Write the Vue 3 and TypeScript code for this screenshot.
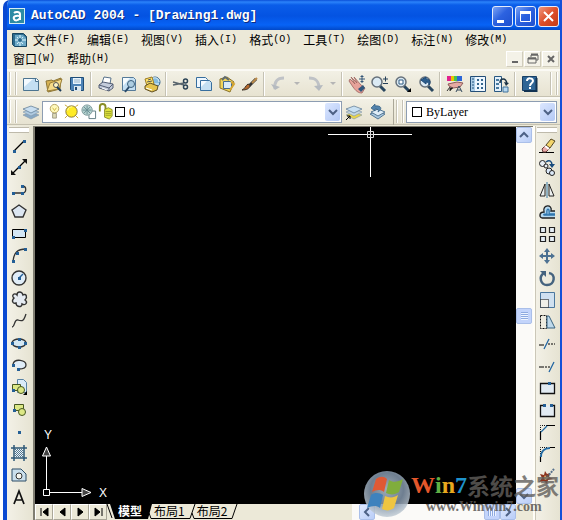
<script setup lang="ts">
import { ref } from 'vue'

interface Tool { icon: string; label: string }

const blue = '#245f96'
const sheet = '#c4dff2'
const dot = (x: number, y: number): string => `<rect x="${x - 1}" y="${y - 1}" width="3" height="3" fill="${blue}"/>`
const lens = (x: number, y: number, inner: string): string =>
  `<path d="M${x + 3} ${y + 4}l5 5" stroke="#29465f" stroke-width="3"/><circle cx="${x}" cy="${y}" r="5" fill="#dbeaf4" stroke="#66717b" stroke-width="1.5"/>${inner}`

const stack = (a: string, b: string, c: string): string =>
  `<path d="M1 12l8-3 8 3-8 4z" fill="${c}" stroke="#7f93a5" stroke-width=".6"/><path d="M1 9l8-3 8 3-8 4z" fill="${b}" stroke="#7f93a5" stroke-width=".6"/><path d="M1 6l8-3 8 3-8 4z" fill="${a}" stroke="#58748e" stroke-width=".7"/>`

const icons: Record<string, string> = {
  new: `<path d="M1.500 3.500h13l2 2v10h-15z" fill="${sheet}" stroke="#4c7490"/><path d="M2 4h9l-9 8z" fill="#f3faff"/><path d="M13.500 3v3.500h3" fill="#fff" stroke="#4c7490"/>`,
  open: `<path d="M1 6l6-1 1 1 8-3-1 11-12 3z" fill="#d7b253" stroke="#8b7434"/><path d="M2 16l3-8 12-4-3 10z" fill="#f5da88" stroke="#9b803a"/><circle cx="11" cy="10" r="2.500" fill="#fff7c6" stroke="#555"/><path d="M12 12l4 4" stroke="#193957" stroke-width="2"/>`,
  save: `<path d="M2.500 2.500h13v13h-12l-1-1z" fill="#4e83b6" stroke="#1d4c78"/><path d="M5 3h8v6h-8z" fill="#e8f4fc"/><path d="M6 5h6M6 7h6" stroke="#9ab4c9"/><path d="M6 11h7v5h-7z" fill="#dce8ef"/><path d="M7 12h2v3h-2z" fill="#234a72"/>`,
  print: `<path d="M5 8l2-6 7 1-1 6z" fill="#fff" stroke="#58728c"/><path d="M2 10l4-3 10 2v4l-4 3-10-3z" fill="#c4ccdb" stroke="#555f75"/><path d="M2 10l10 3 4-4M12 13v3" fill="none" stroke="#555f75"/><path d="M5 13l5 2" stroke="#fff"/>`,
  preview: `<path d="M2.500 2.500h11l2 2v11h-13z" fill="${sheet}" stroke="#557a99"/><path d="M3 3h7l-7 8z" fill="#f6fcff"/><circle cx="11" cy="9" r="3.500" fill="#adcde1" stroke="#3c607c"/><path d="M9 12l-4 5" stroke="#294968" stroke-width="2"/>`,
  publish: `<circle cx="12" cy="7" r="5" fill="#86bcdf" stroke="#326289"/><path d="M8 4c5-3 8 0 8 3M8 9h8" fill="none" stroke="#e7f7ff"/><path d="M2 4l7-2 2 7-7 2z" fill="#ffe56a" stroke="#9d7b24"/><path d="M2 11l5-3 8 3-1 4-5 2-7-3z" fill="#e5c44d" stroke="#625022"/><path d="M5 5l3-1M4 7l5-1" stroke="#555"/><path d="M3 13l6 2" stroke="#fff"/>`,
  cut: `<path d="M1 7l11 3M1 10l11-2" stroke="#59656d" stroke-width="1.500"/><circle cx="13.500" cy="6" r="2" fill="none" stroke="#2b4356" stroke-width="1.500"/><circle cx="13.500" cy="12" r="2" fill="none" stroke="#2b4356" stroke-width="1.500"/>`,
  copy: `<path d="M1.500 2.500h9l2 2v8h-11z" fill="#eef7ff" stroke="#376e9e"/><path d="M5.500 5.500h9l2 2v8h-11z" fill="${sheet}" stroke="#376e9e"/><path d="M6 6h6l-6 6z" fill="#f5fbff"/>`,
  paste: `<path d="M2 4l7-2 7 5-4 10-10-4z" fill="#f0d45a" stroke="#8a732a"/><path d="M4 5l3-3 4 3" fill="none" stroke="#5f6b71" stroke-width="2"/><path d="M5.500 6.500h7l1 1v6h-8z" fill="#d9ebf8" stroke="#456b8e"/><path d="M13 7l3 2-4 6" fill="none" stroke="#d4a533" stroke-width="2"/>`,
  match: `<path d="M15 4l-7 7" stroke="#343434" stroke-width="3"/><path d="M16 3l-5 5" stroke="#ba8b4b" stroke-width="2"/><path d="M9 10c0 4-4 5-8 5 3-1 3-4 6-6z" fill="#b3672d" stroke="#3e3429"/>`,
  undo: `<path d="M14 3C7 3 4 7 5 14" fill="none" stroke="#bfc2c6" stroke-width="3"/><path d="M1 9l4 6 5-3z" fill="#b5babf"/>`,
  redo: `<path d="M3 3c8 0 10 4 10 11" fill="none" stroke="#bfc2c6" stroke-width="3"/><path d="M8 11l5 5 4-6z" fill="#b5babf"/>`,
  pan: `<path d="M2 4l5 5-4-7 6 6-3-6 7 8 4 3-3 5c-4 0-6-2-9-6L1 6z" fill="#e6a29a" stroke="#9b625d" stroke-width=".8"/><path d="M10 14l5-4 2 3-4 4z" fill="#31577c"/><path d="M14 1v6M11 4h6" stroke="#355778"/><path d="M14 0l2 2h-4zM14 8l2-2h-4z" fill="#355778"/>`,
  zoomrt: lens(6, 7, '<path d="M12 4h5M14.500 1.500v5M12 8.500h5" stroke="#243f58"/>'),
  zoomwin: lens(7, 7, '<path d="M5 5h4v4h-4z" fill="#fff" stroke="#315c82"/>') + '<path d="M17 13v4h-4z" fill="#000"/>',
  zoomprev: lens(8, 7, '<path d="M4 5l5-3v2c4 0 5 3 3 6 0-2-1-3-3-3v2z" fill="#2b5d8c" stroke="#1e4a78"/>'),
  props: `<path d="M1 1h4v5h-4z" fill="#e3208e"/><path d="M5 1h3v5h-3z" fill="#e9c500"/><path d="M8 1h3v5h-3z" fill="#45c64c"/><path d="M11 1h5v5h-5z" fill="#2b66d7"/><path d="M2 9l9-2 6 1-3 4-7 1-4-2z" fill="#e5aaa3" stroke="#8b5a59"/><path d="M4 12l-3 4M7 13h-3v3" stroke="#333"/><path d="M10 17l3-6 3 6M11 15h4" fill="none" stroke="#34495d"/>`,
  dc: `<path d="M1.500 1.500h15v15h-15z" fill="#eef7ff" stroke="#244e77"/><path d="M2 2h4v14h-4z" fill="#abcde7"/><path d="M3 4h2M3 7h2M3 10h2M3 13h2" stroke="#24557e"/><path d="M8 4h2v2h-2zM12 4h2v2h-2zM8 8h2v2h-2zM12 8h2v2h-2zM8 12h2v2h-2zM12 12h2v2h-2z" fill="#35678e"/>`,
  palette: `<path d="M2.500 1.500h7v15h-7z" fill="#e4f0fa" stroke="#285882"/><path d="M4 4h3v2h-3zM4 8h3v2h-3zM4 12h3v2h-3z" fill="#497ba0"/><path d="M8 8c0-5 6-6 7 1" fill="none" stroke="#1b3346" stroke-width="1.500"/><path d="M12 7l5 1-3 3z" fill="#1b3346"/><path d="M11 12h5v5h-5z" fill="#b7d8f0" stroke="#41739b"/>`,
  layers: stack('#c8def0', '#b0cbe1', '#88a9c5'),
  layercur: stack('#c9e1f3', '#c5d7e2', '#ead54a') + '<path d="M1 17l4-4M2 13h3v3" stroke="#000" fill="none"/>',
  layerprev: `<path d="M2 11l8-3 7 3-7 5z" fill="#a8c7df" stroke="#557894"/><path d="M3 9l7-3 7 3-7 4z" fill="#dfedf7" stroke="#557894"/><path d="M10 9c5-3 3-7-3-6V1L3 5l4 3V6c3 0 4 1 3 3z" fill="#5283ac" stroke="#315a7d" stroke-width=".7"/>`,
  bulb: `<circle cx="9" cy="6" r="4.500" fill="#fff9bc" stroke="#b5a25d"/><path d="M7 11h4v5h-4z" fill="#dddab8" stroke="#8b8870" stroke-width=".8"/><path d="M7 5l2 3 2-3" fill="none" stroke="#d0b749"/>`,
  sun: `<path d="M2 2l3 2M16 2l-3 2M2 16l3-3M16 16l-3-3" stroke="#c9a72d"/><circle cx="9" cy="9" r="6" fill="#ffeb25" stroke="#857434"/><path d="M5 8c0-3 3-4 5-4" fill="none" stroke="#fffbb6"/>`,
  vp: `<path d="M9.500 8.500h7v8h-7z" fill="#fff" stroke="#5e7b82"/><circle cx="7.500" cy="7.500" r="5.500" fill="#b5d2d0" stroke="#829c9d"/><path d="M7.500 3v9M3 7.500h9M4 4l7 7M4 11l7-7" stroke="#698e93"/>`,
  lock: `<path d="M3 9V4c0-4 6-4 6 0v4" fill="none" stroke="#888c26" stroke-width="2"/><path d="M8 7l4-2 4 2v7l-3 3-5-2z" fill="#dfe43e" stroke="#8d902b"/><path d="M9 9h6M9 11h6M9 13h6" stroke="#9ca027"/>`,
  line: `<path d="M4 15L14 5" stroke="#000" stroke-width="1.300"/>` + dot(4, 15) + dot(14, 5),
  xline: `<path d="M2 16L16 2" stroke="#000" stroke-width="1.300"/><path d="M1 17v-5l5 5zM17 1v5l-5-5z" fill="#111"/>` + dot(9, 9),
  pline: `<path d="M3 13h9M12 13c5 0 5-7 0-7" fill="none" stroke="#333" stroke-width="1.300"/>` + dot(3, 13) + dot(12, 13) + dot(12, 6),
  polygon: `<path d="M9 3l7 5-3 7H5L2 8z" fill="#dce6f1" stroke="#333" stroke-width="1.400"/>`,
  rect: `<path d="M2.500 5.500h13v8h-13z" fill="#d3e6f5" stroke="#000"/>` + dot(3, 13) + dot(15, 6),
  arc: `<path d="M3 15C4 7 7 3 16 3" fill="none" stroke="#333" stroke-width="1.300"/>` + dot(3, 15) + dot(7, 7) + dot(15, 3),
  circle: `<circle cx="9" cy="10" r="7" fill="#e0edf8" stroke="#333" stroke-width="1.400"/><path d="M9 10l4-4" stroke="#245f96" stroke-width="1.500"/>` + dot(9, 10),
  cloud: `<path d="M7 5c-3-3-6 1-3 3-3 3-1 6 2 5 0 4 6 5 6 1 4 2 6-2 3-4 3-3 1-7-2-5-1-4-6-4-6 0z" fill="#e5ebf2" stroke="#333" stroke-width="1.400"/>`,
  spline: `<path d="M2 15c3 0 2-8 6-7 5 2 6 0 8-6" fill="none" stroke="#333" stroke-width="1.300"/>`,
  ellipse: `<ellipse cx="9" cy="9" rx="7" ry="4" fill="#d4e7f3" stroke="#333" stroke-width="1.300"/>` + dot(2, 9) + dot(9, 5) + dot(9, 13) + dot(15, 9),
  earc: `<path d="M3 8c2-6 13-4 13 1 0 4-4 4-7 4" fill="#e0edf8" stroke="#333" stroke-width="1.300"/>` + dot(3, 9) + dot(8, 13),
  insert: `<path d="M7.500 1.500h6l3 3v10h-9z" fill="#d9eaf8" stroke="#5883a5"/><path d="M2.500 6.500h8v6h-8z" fill="#dce886" stroke="#465721"/><circle cx="11" cy="12" r="3.500" fill="#dce886" stroke="#465721"/><path d="M17 13v4h-4z" fill="#000"/>` + dot(3, 12),
  block: `<path d="M4.500 4.500h9v6h-9z" fill="#dce886" stroke="#465721"/><circle cx="12" cy="12" r="3.500" fill="#dce886" stroke="#465721"/>` + dot(4, 10),
  point: dot(9, 10),
  hatch: `<path d="M4 1v16M14 1v16M1 4h16M1 14h16" stroke="#2e5877" stroke-width="1.500"/><path d="M5 5h8v8H5z" fill="#edf5fa"/><path d="M5 5l8 8M5 9l4 4M9 5l4 4M7 5l6 6M5 7l6 6M11 5l2 2M5 11l2 2" stroke="#54768e"/>`,
  region: `<path d="M2 3h9l5 5v7H2z" fill="#cbdfec" stroke="#2c4d67"/><circle cx="9" cy="10" r="3" fill="#f6f6ef" stroke="#333"/>`,
  text: `<path d="M4 16L9 3l5 13M5.500 12h7" fill="none" stroke="#111" stroke-width="1.700"/>`,
  erase: `<path d="M1 15.500h15" stroke="#000"/><path d="M4 12l4-4 4 3-4 4H5z" fill="#e7a9a7" stroke="#673c39"/><path d="M8 8l5-6 4 2-5 7z" fill="#f3d56b" stroke="#544824"/><path d="M7 9l4 3" stroke="#fff" stroke-width="2"/>`,
  copyobj: `<circle cx="4.500" cy="4.500" r="3" fill="#e7eef4" stroke="#222"/><circle cx="8" cy="7" r="2" fill="#e7eef4" stroke="#222"/><circle cx="11" cy="12" r="3" fill="#dceafa" stroke="#222"/><circle cx="14" cy="14" r="2.500" fill="#dceafa" stroke="#222"/><path d="M8 3c4-3 6 0 6 3" fill="none" stroke="#174b7d" stroke-width="1.500"/><path d="M11 5h6l-3 4z" fill="#174b7d"/>`,
  mirror: `<path d="M9 1v16" stroke="#367aa7"/><path d="M7 3v12H2zM11 3v12h5z" fill="#edf1f1" stroke="#222"/>`,
  offset: `<path d="M17 15H4c-3-1-3-6 2-6-2-8 9-8 7-1h4" fill="#b7daf1" stroke="#222" stroke-width="1.300"/><path d="M17 12H6c-1-1 1-1 3-1-1-7 3-6 2 0h6" fill="none" stroke="#2f76ad" stroke-width="1.300"/>`,
  array: `<path d="M2.500 2.500h5v5h-5zM11.500 2.500h5v5h-5zM2.500 11.500h5v5h-5zM11.500 11.500h5v5h-5z" fill="#e5eef5" stroke="#222" stroke-width="1.200"/>`,
  move: `<path d="M9 3v12M3 9h12" stroke="#4c7192" stroke-width="2"/><path d="M9 1l3 4H6zM9 17l3-4H6zM1 9l4-3v6zM17 9l-4-3v6z" fill="#4c7192"/>`,
  rotate: `<path d="M6 4C0 8 3 16 9 16c8 0 9-11 2-12" fill="none" stroke="#45637f" stroke-width="2.500"/><path d="M2 2h6v6z" fill="#45637f"/>`,
  scale: `<path d="M2.500 1.500h14v15h-14z" fill="#cfe0f0" stroke="#4a779e"/><path d="M2.500 8.500h8v8h-8z" fill="#f0f0e8"/><path d="M2.500 8.500h8v8h-8z" fill="none" stroke="#000" stroke-dasharray="1 1"/>`,
  stretch: `<path d="M2.500 2.500h6v13h-6z" fill="none" stroke="#111" stroke-dasharray="2 1"/><path d="M9 3h2l6 12H9z" fill="#bed9eb" stroke="#396380"/>`,
  trim: `<path d="M1 10h5" stroke="#000"/><path d="M6 14l5-10" stroke="#1f64a0" stroke-width="1.300"/><path d="M10 9h7" stroke="#000" stroke-dasharray="2 1"/>`,
  extend: `<path d="M1 10h5" stroke="#000"/><path d="M7 10h6" stroke="#000" stroke-dasharray="2 1"/><path d="M11 15l5-10" stroke="#1f64a0" stroke-width="1.300"/>`,
  break1: `<path d="M2.500 4.500h14v10h-14z" fill="#e2ebf2" stroke="#111" stroke-width="1.300"/>` + dot(11, 4),
  break2: `<path d="M5 4.500H2.500v11h14v-11H14" fill="#e2ebf2" stroke="#111" stroke-width="1.300"/>` + dot(6, 4) + dot(13, 4),
  chamfer: `<path d="M2.500 17V9M9 2.500h8" stroke="#000" stroke-width="1.200"/><path d="M2.500 9V2.500H9" fill="none" stroke="#111" stroke-dasharray="1 1"/><path d="M3 9l6-6" stroke="#236ba3" stroke-width="1.300"/>`,
  fillet: `<path d="M2.500 17v-6M12 2.500h5" stroke="#000" stroke-width="1.200"/><path d="M2.500 9V2.500H9" fill="none" stroke="#111" stroke-dasharray="1 1"/><path d="M3 12c0-6 4-9 9-9" fill="none" stroke="#236ba3" stroke-width="2"/>`,
  explode: `<path d="M7 4l2 3 3-1-1 4 4 2-5 1-1 4-3-3-5 1 3-4-2-4 4 1z" fill="#8b321c"/><path d="M7 8l1 2 3 0-2 2-2 1-1-2z" fill="#ffdd88"/><path d="M11 8l5-6" stroke="#56708b" stroke-width="2" stroke-dasharray="2 1"/>`,
  help: `<path d="M1.500 1.500h14v14h-14z" fill="#2e6595" stroke="#173f65"/><path d="M15.500 3v13H3" fill="none" stroke="#123352" stroke-width="2"/><path d="M6 6c0-4 6-3 6 0 0 2-3 2-3 5M9 12v2" fill="none" stroke="#fff" stroke-width="2"/>`,
}

const groups: Tool[][] = [
  [{ icon: 'new', label: '新建' }, { icon: 'open', label: '打开' }, { icon: 'save', label: '保存' }],
  [{ icon: 'print', label: '打印' }, { icon: 'preview', label: '打印预览' }, { icon: 'publish', label: '发布' }],
  [{ icon: 'cut', label: '剪切' }, { icon: 'copy', label: '复制' }, { icon: 'paste', label: '粘贴' }, { icon: 'match', label: '特性匹配' }],
  [{ icon: 'undo', label: '放弃' }, { icon: 'redo', label: '重做' }],
  [{ icon: 'pan', label: '平移' }, { icon: 'zoomrt', label: '实时缩放' }, { icon: 'zoomwin', label: '窗口缩放' }, { icon: 'zoomprev', label: '缩放上一个' }],
  [{ icon: 'props', label: '特性' }, { icon: 'dc', label: '设计中心' }, { icon: 'palette', label: '工具选项板' }],
  [{ icon: 'help', label: '帮助' }],
]
const tools = (names: string, labels: string): Tool[] => {
  const l = labels.split(' ')
  return names.split(' ').map((icon, i) => ({ icon, label: l[i] }))
}
const drawTools = tools('line xline pline polygon rect arc circle cloud spline ellipse earc insert block point hatch region text',
  '直线 构造线 多段线 正多边形 矩形 圆弧 圆 修订云线 样条曲线 椭圆 椭圆弧 插入块 创建块 点 图案填充 面域 多行文字')
const modifyTools = tools('erase copyobj mirror offset array move rotate scale stretch trim extend break1 break2 chamfer fillet explode',
  '删除 复制对象 镜像 偏移 阵列 移动 旋转 缩放 拉伸 修剪 延伸 打断于点 打断 倒角 圆角 分解')
const menus: [string, string][] = [['文件', 'F'], ['编辑', 'E'], ['视图', 'V'], ['插入', 'I'], ['格式', 'O'], ['工具', 'T'], ['绘图', 'D'], ['标注', 'N'], ['修改', 'M'], ['窗口', 'W'], ['帮助', 'H']]
const layerIcons = ['bulb', 'sun', 'vp', 'lock']
const navs: [string, string][] = [
  ['首个布局', 'M4 3v8M11 3v8L6 7z'], ['上一个布局', 'M10 3v8L5 7z'],
  ['下一个布局', 'M5 3v8l5-4z'], ['末个布局', 'M11 3v8M4 3v8l5-4z'],
]
const tabs = ['模型', '布局1', '布局2']
const current = ref('模型')
</script>

<template>
  <div class="window">
    <header class="title">
      <svg class="logo" viewBox="0 0 16 16"><rect x=".5" y=".5" width="15" height="15" fill="#2d8ba4" stroke="#d5edf3" /><path d="M5 5c2-2 6-1 6 1v6M11 8C6 7 4 9 5 11s4 2 6-1" fill="none" stroke="#fff" stroke-width="2" /></svg>
      <h1>AutoCAD 2004 - [Drawing1.dwg]</h1>
      <div class="winbtns">
        <button aria-label="最小化"><svg viewBox="0 0 19 19"><path d="M4 13h7v3H4z" fill="#fff" /></svg></button>
        <button aria-label="最大化"><svg viewBox="0 0 19 19"><path d="M4.500 5v9.500h10V5" fill="none" stroke="#fff" /><path d="M4 4h11v3H4z" fill="#fff" /></svg></button>
        <button class="close" aria-label="关闭"><svg viewBox="0 0 19 19"><path d="M5 5l9 9M14 5l-9 9" stroke="#fff" stroke-width="2" /></svg></button>
      </div>
    </header>

    <nav class="menu">
      <svg class="doc" viewBox="0 0 16 16"><path d="M1.500 1.500h11l3 3v10h-12l-2-2z" fill="#2c6b8e" stroke="#174560" /><path d="M4 3h8l3 3v8H4z" fill="#6da9c6" /><path d="M9 3v11M4 8h11M6 5l6 7M12 5l-6 7" stroke="#e1f8ff" /><circle cx="9" cy="8" r="2" fill="#2c6b8e" /></svg>
      <button v-for="[name, key] in menus" :key="key">{{ name }}<span>({{ key }})</span></button>
      <div class="mdi">
        <button aria-label="最小化图形"><svg viewBox="0 0 16 16"><path d="M5 10h6v2H5z" fill="#666" /></svg></button>
        <button aria-label="还原图形"><svg viewBox="0 0 16 16"><path d="M6 6V4h7v5h-2M3 7h8v5H3z" fill="none" stroke="#666" /><path d="M6 3.500h7M3 7.500h8" stroke="#666" stroke-width="2" /></svg></button>
        <button aria-label="关闭图形"><svg viewBox="0 0 16 16"><path d="M5 5l6 6M11 5l-6 6" stroke="#666" stroke-width="2" /></svg></button>
      </div>
    </nav>

    <div class="bar">
      <i class="grip"></i>
      <template v-for="(g, gi) in groups" :key="gi">
        <i v-if="gi" class="sep"></i>
        <template v-for="t in g" :key="t.icon">
          <button class="tool" :aria-label="t.label"><svg viewBox="0 0 18 18" v-html="icons[t.icon]"></svg></button>
          <button v-if="gi === 3" class="drop" :aria-label="t.label + '列表'"><svg viewBox="0 0 6 4"><path d="M0 0h6L3 3z" fill="#b5b5b5" /></svg></button>
        </template>
      </template>
      <i class="grip end"></i>
    </div>

    <div class="bar second">
      <div class="part wide">
        <i class="grip"></i>
        <button class="tool" aria-label="图层特性管理器"><svg viewBox="0 0 18 18" v-html="icons.layers"></svg></button>
        <div class="combo">
          <svg v-for="n in layerIcons" :key="n" viewBox="0 0 18 18" v-html="icons[n]"></svg>
          <i class="swatch"></i>
          <select aria-label="图层"><option>0</option></select>
          <span class="arrow"><svg viewBox="0 0 10 8"><path d="M1 2l4 4 4-4" fill="none" stroke="#4d6185" stroke-width="2" /></svg></span>
        </div>
        <button class="tool" aria-label="置为当前图层"><svg viewBox="0 0 18 18" v-html="icons.layercur"></svg></button>
        <button class="tool" aria-label="上一个图层"><svg viewBox="0 0 18 18" v-html="icons.layerprev"></svg></button>
      </div>
      <div class="part">
        <i class="grip"></i>
        <div class="combo color">
          <i class="swatch"></i>
          <select aria-label="颜色"><option>ByLayer</option></select>
          <span class="arrow"><svg viewBox="0 0 10 8"><path d="M1 2l4 4 4-4" fill="none" stroke="#4d6185" stroke-width="2" /></svg></span>
        </div>
      </div>
    </div>

    <main class="work">
      <aside class="side left">
        <i class="hgrip"></i>
        <button v-for="t in drawTools" :key="t.icon" :aria-label="t.label"><svg viewBox="0 0 18 18" v-html="icons[t.icon]"></svg></button>
      </aside>
      <section class="view">
        <div class="canvas">
          <svg class="cross" viewBox="0 0 84 50"><path d="M0 7.500h39M46 7.500h38M42.500 0v4M42.500 11v39" stroke="#fff" /><path d="M39.500 4.500h6v6h-6zM42.500 4v7M39 7.500h7" fill="none" stroke="#ddd" /></svg>
          <svg class="ucs" viewBox="0 0 72 70"><path d="M7.500 61V28M11 64.500h32M4.500 61.500h6v6h-6z" fill="none" stroke="#fff" /><path d="M7.500 19l4 9h-8zM52 64.500l-9-4v8z" fill="#444" stroke="#fff" /><text x="5" y="11" class="axis">Y</text><text x="60" y="69" class="axis">X</text></svg>
        </div>
        <div class="vscroll">
          <button class="sb" aria-label="向上滚动"><svg viewBox="0 0 10 8"><path d="M1 6l4-4 4 4" fill="none" stroke="#4d6185" stroke-width="2" /></svg></button>
          <i class="sb thumb"></i>
          <button class="sb" aria-label="向下滚动"><svg viewBox="0 0 10 8"><path d="M1 2l4 4 4-4" fill="none" stroke="#4d6185" stroke-width="2" /></svg></button>
        </div>
        <div class="bottom">
          <button v-for="[label, d] in navs" :key="label" class="nav" :aria-label="label"><svg viewBox="0 0 15 14"><path :d="d" fill="#000" stroke="#000" /></svg></button>
          <div class="tabs">
            <svg viewBox="0 0 10 15"><path d="M3 0h7v15H8z" fill="#000" /><path d="M0 0l5 14" stroke="#000" /></svg>
            <template v-for="(t, i) in tabs" :key="t">
              <button :class="{ on: t === current }" @click="current = t">{{ t }}</button>
              <svg viewBox="0 0 10 15"><path v-if="t === current" d="M0 0h9L5 15H0z" fill="#000" /><path v-else d="M9 0L4 14.500H0" fill="none" stroke="#000" /><path v-if="i < 2" d="M6 9l2 5.500h2" fill="none" stroke="#000" /></svg>
            </template>
          </div>
          <div class="hscroll">
            <button class="sb" aria-label="向左滚动"><svg viewBox="0 0 10 8"><path d="M7 0L3 4l4 4" fill="none" stroke="#4d6185" stroke-width="2" /></svg></button>
            <i class="sb thumb side-thumb"></i>
            <button class="sb" aria-label="向右滚动"><svg viewBox="0 0 10 8"><path d="M3 0l4 4-4 4" fill="none" stroke="#4d6185" stroke-width="2" /></svg></button>
          </div>
        </div>
      </section>
      <aside class="side right">
        <i class="hgrip"></i>
        <button v-for="t in modifyTools" :key="t.icon" :aria-label="t.label"><svg viewBox="0 0 18 18" v-html="icons[t.icon]"></svg></button>
      </aside>
    </main>

    <div class="mark">
      <svg class="orb" viewBox="0 0 48 48">
        <defs><radialGradient id="orb" cx=".5" cy=".4" r=".6"><stop offset="0" stop-color="#bccbd9" /><stop offset=".6" stop-color="#8295aa" /><stop offset="1" stop-color="#c2ccd5" /></radialGradient></defs>
        <circle cx="24" cy="24" r="23" fill="url(#orb)" opacity=".85" />
        <path d="M13 9c4-3 8-3 11 0l-3 13c-4-3-8-2-12 0z" fill="#df5934" />
        <path d="M26 10c4 3 9 2 14-1l-4 13c-4 3-9 3-13 1z" fill="#80ad3c" />
        <path d="M8 25c4-3 9-2 12 0l-3 13c-4-3-8-2-13 0z" fill="#3e82bd" />
        <path d="M22 26c4 2 9 2 13-1l-4 13c-4 3-8 3-12 1z" fill="#efc541" />
      </svg>
      <div class="words">
        <p class="brand"><span class="w">W</span><span class="i">i</span><span class="n">n</span><span class="s">7</span><b>系统之家</b></p>
        <p class="url">www.Winwin7.com</p>
      </div>
    </div>
  </div>
</template>

<style>
body { margin: 0; background: #fff; }
</style>

<style scoped>
* { box-sizing: border-box; }
button { border: 0; padding: 0; background: none; font: inherit; color: inherit; display: flex; align-items: center; justify-content: center; flex: none; }
svg { display: block; flex: none; overflow: visible; }
p, h1 { margin: 0; }
.window { position: relative; display: flex; flex-direction: column; min-height: 100vh; margin-left: 3px; border-left: 4px solid #0a49d2; border-right: 2px solid #1550d8; border-top-left-radius: 7px; background: #ece9d8; font: 12px/18px "Liberation Sans", "Noto Sans CJK SC", sans-serif; color: #000; overflow: hidden; }
.title { display: flex; align-items: center; gap: 6px; height: 30px; padding: 2px 1px 0 2px; background: linear-gradient(#0a4fd8 0, #2b83fa 2px, #0a5de9 5px, #0453e2 16px, #0763f6 25px, #0148c8 30px); }
.logo { width: 16px; height: 16px; }
h1 { flex: 1; font: bold 13px/18px "Liberation Mono", monospace; color: #fff; text-shadow: 1px 1px #0b2d83; white-space: nowrap; }
.winbtns { display: flex; gap: 2px; }
.winbtns button { width: 21px; height: 21px; border: 1px solid #e4ecfc; border-radius: 3px; background: linear-gradient(135deg, #7ca4f5, #2c62e0 45%, #1e50cf); }
.winbtns .close { background: linear-gradient(135deg, #f0977d, #dd4e29 50%, #c23b16); }
.winbtns svg { width: 19px; height: 19px; }

.menu { display: flex; flex-wrap: wrap; align-items: center; padding: 0 1px 1px 4px; background: #ece9d8; font-family: "Noto Sans CJK SC", sans-serif; }
.menu > button { height: 19px; margin-right: 12px; white-space: nowrap; }
.menu > button:nth-of-type(n+10) { margin-left: 2px; margin-right: 10px; }
.menu button span { font: 10px/18px "Liberation Mono", monospace; }
.doc { width: 16px; height: 16px; margin-right: 6px; }
.mdi { display: flex; gap: 1px; margin-left: auto; }
.mdi button { width: 17px; height: 16px; border: 1px solid; border-color: #fff #d0ccbc #d0ccbc #fff; background: #f4f2e8; }
.mdi svg { width: 16px; height: 16px; }

.bar { display: flex; align-items: center; height: 28px; border-top: 2px solid #fbfaf5; border-bottom: 1px solid #c5c1b0; background: linear-gradient(#f2f0e5, #e7e3d1); }
.second { margin-bottom: 1px; }
.grip { flex: none; width: 7px; height: 23px; margin: 0 3px 0 2px; border: solid #c5c2b4; border-width: 0 1px; box-shadow: inset 1px 0 #fff, inset -1px 0 #f5f3e9, 1px 0 #fff; }
.end { margin: 0 3px 0 auto; }
.sep { flex: none; width: 6px; height: 24px; background: linear-gradient(90deg, transparent 2px, #c5c2b4 2px, #c5c2b4 3px, #fff 3px, #fff 4px, transparent 4px); }
.tool { width: 23px; height: 24px; }
.tool svg { width: 18px; height: 18px; }
.drop { width: 13px; height: 24px; }
.drop svg { width: 6px; height: 4px; }
.part { display: flex; align-items: center; flex: 1 1 0; min-width: 0; height: 26px; padding-right: 3px; }
.wide { flex: 0 0 70%; padding-right: 5px; border-right: 1px solid #aaa798; }
.combo { display: flex; align-items: center; flex: 1; min-width: 0; height: 22px; border: 1px solid #8d9db2; background: #fff; padding: 1px 1px 1px 3px; }
.combo > svg { width: 17px; height: 17px; }
.swatch { flex: none; width: 10px; height: 10px; margin-left: 1px; border: 1px solid #000; background: #fff; }
.color { padding-left: 4px; }
.combo select { flex: 1; min-width: 0; height: 18px; margin: 0; border: 0; padding: 0 4px; appearance: none; background: transparent; font: 12px/18px "Liberation Serif", serif; color: #000; }
.arrow { display: flex; align-items: center; justify-content: center; width: 15px; height: 18px; border-radius: 2px; background: linear-gradient(135deg, #dce7ff, #b3c8f5); pointer-events: none; }
.arrow svg, .sb svg { width: 10px; height: 8px; }

.work { display: flex; flex: 1; align-items: stretch; min-height: 0; }
.side { display: flex; flex-direction: column; align-items: center; flex: none; background: linear-gradient(90deg, #f3f1e7, #e6e3d2); }
.left { width: 28px; padding-right: 3px; border-right: 2px solid #807e72; }
.right { width: 27px; padding-right: 1px; border-left: 2px solid #fffef8; box-shadow: inset 1px 0 #cbc7b8; }
.side button { width: 22px; height: 22px; }
.side svg { width: 18px; height: 18px; }
.hgrip { width: 20px; height: 6px; margin: 1px 0; border: solid #bebaab; border-width: 1px 0; background: #fff; flex: none; }
.right .hgrip { margin-bottom: 2px; }
.view { display: grid; grid-template-columns: 1fr 17px; grid-template-rows: 1fr 16px; flex: 1; min-width: 0; background: #ece9d8; border-top: 1px solid #77756b; }
.canvas { position: relative; background: #000; min-height: 300px; }
.cross { position: absolute; left: 293px; top: 0; width: 84px; height: 50px; }
.ucs { position: absolute; left: 4px; bottom: 6px; width: 72px; height: 70px; }
.axis { font: 12px "Liberation Sans", sans-serif; fill: #fff; }
.vscroll { display: flex; flex-direction: column; justify-content: space-between; background: #fbfaf8; }
.sb { display: flex; align-items: center; justify-content: center; flex: none; width: 16px; height: 16px; border: 1px solid #aabfe9; border-radius: 2px; background: linear-gradient(135deg, #dfe9ff, #b9cdf7); }
.thumb { background: repeating-linear-gradient(#8eaae0 0 1px, #eef4ff 1px 2px) center / 7px 8px no-repeat, #c3d4fb; }
.side-thumb { margin-left: auto; background: repeating-linear-gradient(90deg, #8eaae0 0 1px, #eef4ff 1px 2px) center / 8px 7px no-repeat, #c3d4fb; }
.bottom { grid-column: 1 / 3; display: flex; align-items: stretch; min-width: 0; padding-right: 17px; }
.nav { width: 18px; border: 1px solid; border-color: #fff #aaa798 #aaa798 #fff; }
.nav svg { width: 15px; height: 14px; }
.tabs { display: flex; flex: 1; height: 15px; font-family: "Noto Sans CJK SC", sans-serif; line-height: 14px; }
.tabs svg { width: 10px; height: 15px; }
.tabs button { height: 15px; padding: 0 1px; border-bottom: 1px solid #000; white-space: nowrap; }
.tabs .on { background: #000; color: #fff; font-weight: bold; }
.hscroll { display: flex; width: 34%; padding-left: 7px; background: #fbfaf8; }

.mark { position: absolute; right: 1px; bottom: 2px; display: flex; align-items: flex-end; pointer-events: none; }
.orb { width: 48px; height: 48px; }
.words { display: flex; flex-direction: column; gap: 2px; padding-bottom: 4px; }
.brand { display: flex; align-items: center; height: 26px; font: bold 24px/26px "Liberation Serif", serif; }
.brand b { font: bold 23px/26px "Noto Sans CJK SC", sans-serif; color: #625f5c; opacity: .8; }
.w { color: #e4572b; } .i { color: #5faf45; } .n { color: #e8a91f; } .s { color: #1e93cc; }
.url { height: 14px; padding-left: 15px; font: bold 14px/14px "Liberation Serif", serif; color: #5c5956; opacity: .85; }
</style>
